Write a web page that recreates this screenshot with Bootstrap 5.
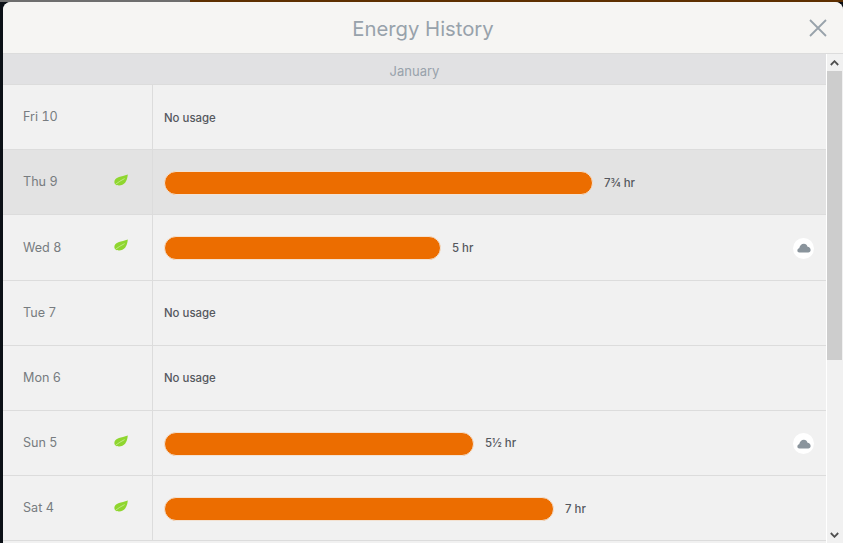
<!DOCTYPE html>
<html lang="en">
<head>
    <meta charset="UTF-8">
    <title>Energy History</title>
    <link href="https://cdn.jsdelivr.net/npm/bootstrap@5.3.0/dist/css/bootstrap.min.css" rel="stylesheet">
    <style>
        html, body { height: 100%; overflow: hidden; }
        body {
            background: linear-gradient(90deg, #6e6e6e 0, #6e6e6e 190px, #5e2f00 190px) top left / 100% 2px no-repeat, #0b1016;
            padding: 2px 0 0 3px;
            font-family: "Inter", "Liberation Sans", sans-serif;
            color: #55595f;
        }
        .history-panel { height: 541px; background: #f1f1f1; border-radius: 8px 8px 0 0; overflow: hidden; }
        .history-head { height: 52px; flex: none; background: #f6f5f3; border-bottom: 1px solid #dcdcdc; padding-top: 4px; position: relative; }
        .history-title { font-size: 20.3px; font-weight: 400; color: #98a2ab; margin: 0; }
        .history-close { position: absolute; top: 17px; right: 16px; width: 18px; height: 18px; padding: 0; background: none; border: 0; line-height: 0; }
        .history-list { width: 823px; flex: none; }
        .month-bar { height: 31.15px; padding-top: 5px; background: #e1e1e3; border-bottom: 1px solid #dcdcdc; color: #98a2ab; font-size: 13px; }
        .day-row { height: 65.15px; border-bottom: 1px solid #dcdcdc; }
        .day-row.is-high { background: #e3e3e3; }
        .day-name { width: 150px; flex: none; padding: 1.1px 24px 0 20px; border-right: 1px solid #dcdcdc; font-size: 12.6px; font-variant-numeric: tabular-nums; color: #777c80; }
        .day-name svg { margin-bottom: 5.1px; }
        .day-main { padding: 2px 12px 0 11px; font-size: 11.4px; font-weight: 500; color: #55585e; }
        .usage-bar { height: 24px; background: #ec6d00; border: 1px solid #f3e2d2; border-radius: 12px; flex: none; }
        .usage-label { margin-left: 11px; }
        .cloud-dot { width: 21px; height: 21px; background: #fff; border-radius: 50%; flex: none; }
        .fake-scroll { width: 17px; flex: none; padding-right: 1px; background: #f1f1f1; border-left: 1px solid #fff; }
        .fake-scroll .arrow { height: 17px; flex: none; }
        .fake-thumb { height: 289px; width: 15px; background: #cdcdcd; }
    </style>
</head>
<body>

<svg width="0" height="0" class="position-absolute">
    <symbol id="leaf" viewBox="0 0 14 12">
        <path d="M13.8.4C13.2 7.4 10.2 11.4 5 11.4 3.4 11.4 2 11 1.2 10.2.4 9.4.1 8.2.6 6.6 1.6 3 7 2.6 13.8.4Z" fill="#8fd62f"/>
        <path d="M1.4 10.4C4 8.2 7.4 6.2 10.6 4.6" stroke="#d4f0a8" stroke-width=".7" fill="none"/>
    </symbol>
    <symbol id="cloud" viewBox="0 0 15 11">
        <path d="M2.4 10.4C1 10.4.2 9.4.2 8.2.2 7 1 6 2.2 5.8 2.8 2.8 4.8.8 7.4.8 9.4.8 10.8 2 11.4 4 13.2 4.2 14.8 5.8 14.8 7.6 14.8 9.2 13.8 10.4 12.2 10.4Z" fill="#8a949c"/>
    </symbol>
</svg>

<div class="history-panel d-flex flex-column">
    <div class="history-head d-flex align-items-center justify-content-center">
        <h1 class="history-title">Energy History</h1>
        <button type="button" class="history-close" aria-label="Close">
            <svg width="18" height="18" viewBox="0 0 18 18"><path d="M1 1 17 17M17 1 1 17" stroke="#98a2ab" stroke-width="1.8" fill="none"/></svg>
        </button>
    </div>
    <div class="d-flex flex-grow-1 overflow-hidden">
        <div class="history-list">
            <div class="month-bar d-flex align-items-center justify-content-center">January</div>

            <div class="day-row d-flex">
                <div class="day-name d-flex align-items-center justify-content-between"><span>Fri 10</span></div>
                <div class="day-main d-flex align-items-center flex-grow-1">No usage</div>
            </div>
            <div class="day-row is-high d-flex">
                <div class="day-name d-flex align-items-center justify-content-between"><span>Thu 9</span><svg width="14" height="12"><use href="#leaf"/></svg></div>
                <div class="day-main d-flex align-items-center flex-grow-1">
                    <div class="usage-bar" style="width: 429px"></div><span class="usage-label">7¾ hr</span>
                </div>
            </div>
            <div class="day-row d-flex">
                <div class="day-name d-flex align-items-center justify-content-between"><span>Wed 8</span><svg width="14" height="12"><use href="#leaf"/></svg></div>
                <div class="day-main d-flex align-items-center flex-grow-1">
                    <div class="usage-bar" style="width: 277px"></div><span class="usage-label">5 hr</span>
                    <span class="cloud-dot d-flex align-items-center justify-content-center ms-auto"><svg width="14" height="10"><use href="#cloud"/></svg></span>
                </div>
            </div>
            <div class="day-row d-flex">
                <div class="day-name d-flex align-items-center justify-content-between"><span>Tue 7</span></div>
                <div class="day-main d-flex align-items-center flex-grow-1">No usage</div>
            </div>
            <div class="day-row d-flex">
                <div class="day-name d-flex align-items-center justify-content-between"><span>Mon 6</span></div>
                <div class="day-main d-flex align-items-center flex-grow-1">No usage</div>
            </div>
            <div class="day-row d-flex">
                <div class="day-name d-flex align-items-center justify-content-between"><span>Sun 5</span><svg width="14" height="12"><use href="#leaf"/></svg></div>
                <div class="day-main d-flex align-items-center flex-grow-1">
                    <div class="usage-bar" style="width: 310px"></div><span class="usage-label">5½ hr</span>
                    <span class="cloud-dot d-flex align-items-center justify-content-center ms-auto"><svg width="14" height="10"><use href="#cloud"/></svg></span>
                </div>
            </div>
            <div class="day-row d-flex">
                <div class="day-name d-flex align-items-center justify-content-between"><span>Sat 4</span><svg width="14" height="12"><use href="#leaf"/></svg></div>
                <div class="day-main d-flex align-items-center flex-grow-1">
                    <div class="usage-bar" style="width: 390px"></div><span class="usage-label">7 hr</span>
                </div>
            </div>
        </div>
        <div class="fake-scroll d-flex flex-column">
            <div class="arrow d-flex align-items-center justify-content-center"><svg width="9" height="6" viewBox="0 0 9 6"><path d="M.8 5 4.5 1.2 8.2 5" stroke="#505050" stroke-width="1.8" fill="none"/></svg></div>
            <div class="fake-thumb"></div>
            <div class="arrow d-flex align-items-center justify-content-center mt-auto"><svg width="9" height="6" viewBox="0 0 9 6"><path d="M.8 1 4.5 4.8 8.2 1" stroke="#505050" stroke-width="1.8" fill="none"/></svg></div>
        </div>
    </div>
</div>

</body>
</html>
